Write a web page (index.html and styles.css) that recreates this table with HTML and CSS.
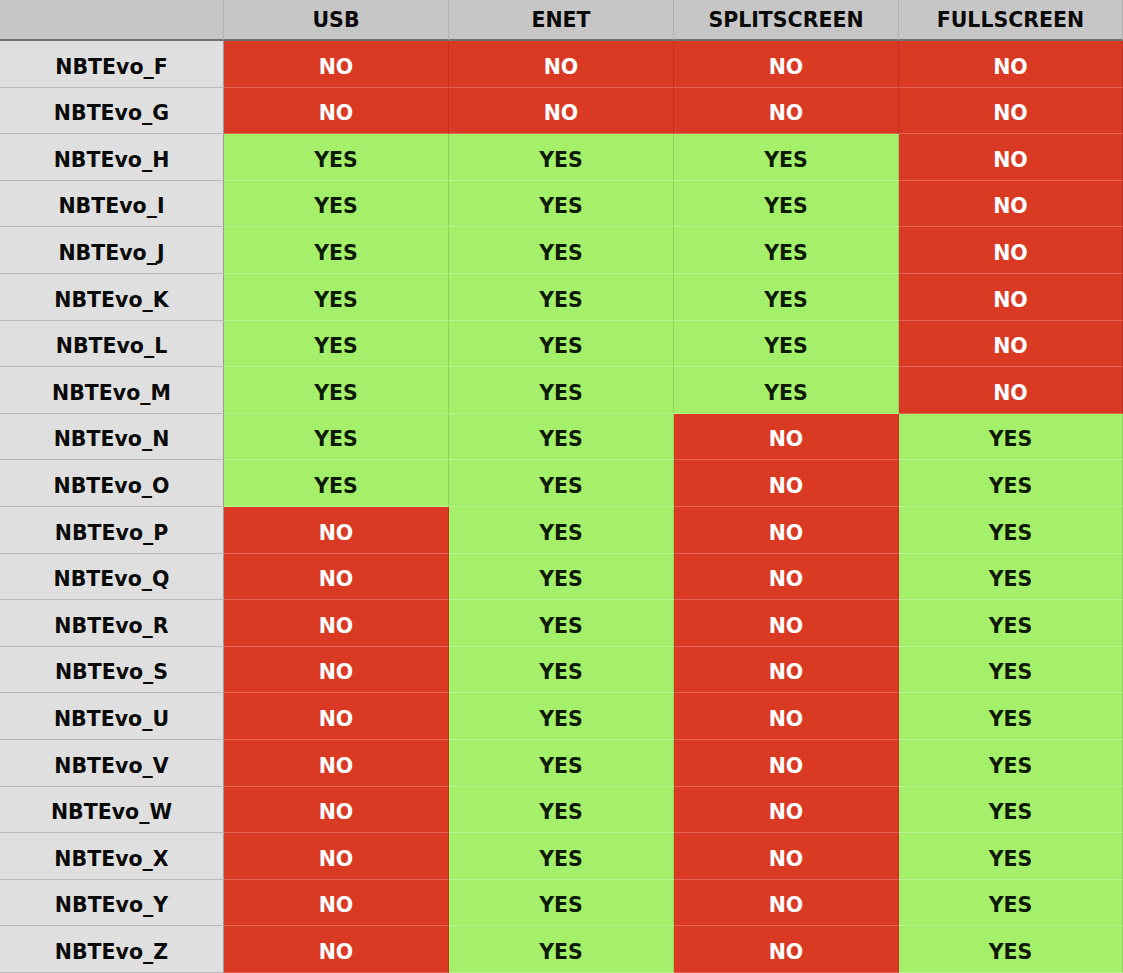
FILE: index.html
```html
<!DOCTYPE html>
<html>
<head>
<meta charset="utf-8">
<link rel="stylesheet" href="styles.css">
</head>
<body>
<div class="table">
  <div class="hd corner"></div>
  <div class="hd">USB</div>
  <div class="hd">ENET</div>
  <div class="hd">SPLITSCREEN</div>
  <div class="hd">FULLSCREEN</div>

  <div class="lbl">NBTEvo_F</div><div class="c no">NO</div><div class="c no">NO</div><div class="c no">NO</div><div class="c no">NO</div>
  <div class="lbl">NBTEvo_G</div><div class="c no">NO</div><div class="c no">NO</div><div class="c no">NO</div><div class="c no">NO</div>
  <div class="lbl">NBTEvo_H</div><div class="c yes">YES</div><div class="c yes">YES</div><div class="c yes">YES</div><div class="c no">NO</div>
  <div class="lbl">NBTEvo_I</div><div class="c yes">YES</div><div class="c yes">YES</div><div class="c yes">YES</div><div class="c no">NO</div>
  <div class="lbl">NBTEvo_J</div><div class="c yes">YES</div><div class="c yes">YES</div><div class="c yes">YES</div><div class="c no">NO</div>
  <div class="lbl">NBTEvo_K</div><div class="c yes">YES</div><div class="c yes">YES</div><div class="c yes">YES</div><div class="c no">NO</div>
  <div class="lbl">NBTEvo_L</div><div class="c yes">YES</div><div class="c yes">YES</div><div class="c yes">YES</div><div class="c no">NO</div>
  <div class="lbl">NBTEvo_M</div><div class="c yes">YES</div><div class="c yes">YES</div><div class="c yes">YES</div><div class="c no">NO</div>
  <div class="lbl">NBTEvo_N</div><div class="c yes">YES</div><div class="c yes">YES</div><div class="c no">NO</div><div class="c yes">YES</div>
  <div class="lbl">NBTEvo_O</div><div class="c yes">YES</div><div class="c yes">YES</div><div class="c no">NO</div><div class="c yes">YES</div>
  <div class="lbl">NBTEvo_P</div><div class="c no">NO</div><div class="c yes">YES</div><div class="c no">NO</div><div class="c yes">YES</div>
  <div class="lbl">NBTEvo_Q</div><div class="c no">NO</div><div class="c yes">YES</div><div class="c no">NO</div><div class="c yes">YES</div>
  <div class="lbl">NBTEvo_R</div><div class="c no">NO</div><div class="c yes">YES</div><div class="c no">NO</div><div class="c yes">YES</div>
  <div class="lbl">NBTEvo_S</div><div class="c no">NO</div><div class="c yes">YES</div><div class="c no">NO</div><div class="c yes">YES</div>
  <div class="lbl">NBTEvo_U</div><div class="c no">NO</div><div class="c yes">YES</div><div class="c no">NO</div><div class="c yes">YES</div>
  <div class="lbl">NBTEvo_V</div><div class="c no">NO</div><div class="c yes">YES</div><div class="c no">NO</div><div class="c yes">YES</div>
  <div class="lbl">NBTEvo_W</div><div class="c no">NO</div><div class="c yes">YES</div><div class="c no">NO</div><div class="c yes">YES</div>
  <div class="lbl">NBTEvo_X</div><div class="c no">NO</div><div class="c yes">YES</div><div class="c no">NO</div><div class="c yes">YES</div>
  <div class="lbl">NBTEvo_Y</div><div class="c no">NO</div><div class="c yes">YES</div><div class="c no">NO</div><div class="c yes">YES</div>
  <div class="lbl">NBTEvo_Z</div><div class="c no">NO</div><div class="c yes">YES</div><div class="c no">NO</div><div class="c yes">YES</div>
</div>
</body>
</html>
```

FILE: styles.css
```css
html, body {
  margin: 0;
  padding: 0;
  background: #ffffff;
}

.table {
  display: grid;
  grid-template-columns: 224px 225px 225px 225px 224px;
  grid-template-rows: 41px repeat(20, 1fr);
  width: 1123px;
  height: 973px;
  font-family: "DejaVu Sans", "Liberation Sans", sans-serif;
  font-weight: bold;
  font-size: 20.5px;
  line-height: 1;
}

.table > div {
  display: flex;
  align-items: center;
  justify-content: center;
  box-sizing: border-box;
}

.hd {
  background: #c6c6c6;
  color: #0a0a0a;
  border-right: 1px solid #b2b2b2;
  border-bottom: 2px solid #6e6e6e;
  padding-top: 1px;
}

.lbl {
  background: #dfdfdf;
  color: #0a0a0a;
  border-bottom: 1px solid #b9b9b9;
  border-right: 1px solid #9c9c9c;
  padding-top: 6px;
}

.c {
  border-bottom: 1px solid rgba(255, 255, 255, 0.22);
  border-right: 1px solid rgba(0, 0, 0, 0.12);
  padding-top: 6px;
}

.no {
  background: #da3a24;
  color: #ffffff;
}

.yes {
  background: #a5f06a;
  color: #0c1a06;
}
```
